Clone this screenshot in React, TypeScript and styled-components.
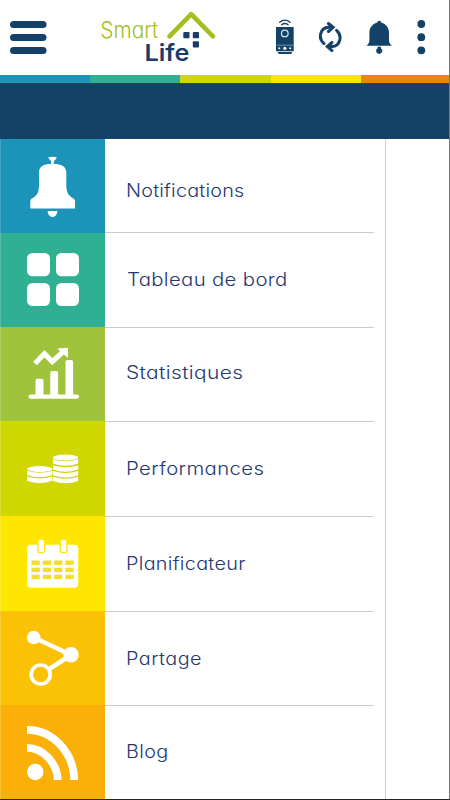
import React from "react";
import styled, { createGlobalStyle } from "styled-components";

const NAVY = "#144168";

const GlobalStyle = createGlobalStyle`
  *, *::before, *::after { box-sizing: border-box; }
  body { margin: 0; background: #fff; overflow: hidden; }
  svg { display: block; }
`;

const Screen = styled.div`
  width: 450px;
  height: 800px;
  display: flex;
  flex-direction: column;
  background: #fff;
  border-right: 1px solid #77797b;
  border-bottom: 1px solid #252525;
  font-family: Inter, "Open Sans", sans-serif;
  font-feature-settings: "cv11" 1;
  overflow: hidden;
`;

const Header = styled.header`
  height: 75px;
  flex: none;
  display: flex;
  align-items: flex-start;
`;

const IconButton = styled.button<{ $w: number; $ml: number }>`
  width: ${(p) => p.$w}px;
  height: 75px;
  margin: 0 0 0 ${(p) => p.$ml}px;
  padding: 0;
  border: 0;
  background: none;
  color: ${NAVY};
  flex: none;
`;

const Logo = styled.div`
  width: 120px;
  height: 75px;
  margin-left: 50px;
  flex: none;
`;

const Stripe = styled.div`
  height: 8px;
  flex: none;
  display: grid;
  grid-template-columns: 90px 90px 91px 90px 1fr;
`;

const Swatch = styled.span<{ $color: string }>`
  background: ${(p) => p.$color};
`;

const Banner = styled.div`
  height: 56px;
  flex: none;
  background: ${NAVY};
  border-top: 1px solid #244653;
`;

const Drawer = styled.nav`
  width: 386px;
  flex: 1;
  border-right: 1px solid #cfcfcf;
`;

const Row = styled.a<{ $h: number }>`
  display: flex;
  height: ${(p) => p.$h}px;
  text-decoration: none;
`;

const Tile = styled.span<{ $color: string }>`
  width: 105px;
  flex: none;
  background: ${(p) => p.$color};
  border-left: 1px solid rgba(255, 255, 255, 0.18);
  color: #fff;
`;

const LabelCell = styled.span<{ $top: number; $left: number; $line: "top" | "bottom" | "none" }>`
  width: 269px;
  padding: ${(p) => p.$top}px 0 0 ${(p) => p.$left}px;
  border: 0 solid #cbcbce;
  ${(p) => (p.$line === "none" ? "" : `border-${p.$line}-width: 1px;`)}
`;

const Label = styled.span<{ $spacing: number; $stretch: number }>`
  display: inline-block;
  color: #25376f;
  font-size: 18px;
  font-weight: 300;
  line-height: 22px;
  letter-spacing: ${(p) => p.$spacing}px;
  white-space: nowrap;
  transform: scaleX(${(p) => p.$stretch});
  transform-origin: 0 0;
`;

const MenuIcon = () => (
  <svg width="37" height="75" viewBox="0 0 37 75" fill="currentColor">
    <rect x="0" y="21" width="36.5" height="7" rx="3.5" />
    <rect x="0" y="34" width="36.5" height="7" rx="3.5" />
    <rect x="0" y="47" width="36.5" height="7" rx="3.5" />
  </svg>
);

const LogoMark = () => (
  <svg width="120" height="75" viewBox="97 0 120 75">
    <text x="100.3" y="38" fontSize="22.5" fontWeight="300" fill="#a3bf20" textLength="58" lengthAdjust="spacingAndGlyphs">Smart</text>
    <text x="144.5" y="61.3" fontSize="23.5" fontWeight="600" fill="#1b3b6b" textLength="45" lengthAdjust="spacingAndGlyphs">Life</text>
    <path d="M169.5 36.3 191.2 14.2 213 36.3" fill="none" stroke="#a2c01b" strokeWidth="4.6" strokeLinecap="round" strokeLinejoin="round" />
    <g fill="#1b3b6b">
      <rect x="183.3" y="32" width="6.2" height="6.2" rx="1" />
      <rect x="192.8" y="32" width="6.2" height="6.2" rx="1" />
      <rect x="192.8" y="41.3" width="6.2" height="6.2" rx="1" />
    </g>
  </svg>
);

const BoilerIcon = () => (
  <svg width="20" height="75" viewBox="275 0 20 75">
    <g fill="none" stroke="currentColor" strokeWidth="1.4" strokeLinecap="round">
      <path d="M279.7 22.2q5.2-4.2 10.3 0" />
      <path d="M281.6 24.7q3.3-2.4 6.5 0" />
    </g>
    <path d="M276 27h17.7v24.3H276zM277.5 52h14.7l-1 2h-12.4z" fill="currentColor" />
    <circle cx="284.8" cy="33.4" r="3.3" fill="none" stroke="#dce8f1" strokeWidth="1.2" />
    <path d="M276.5 45.2h16.8" stroke="#8ba5bb" strokeWidth=".8" />
    <g fill="#fff">
      <circle cx="279.3" cy="48.3" r="1" />
      <circle cx="284.8" cy="48.3" r="1.6" />
      <circle cx="290.2" cy="48.3" r="1" />
    </g>
  </svg>
);

const SyncIcon = () => (
  <svg width="24" height="75" viewBox="318 0 24 75" fill="none" stroke="currentColor" strokeWidth="3" strokeLinecap="round">
    <path d="M324 43.6C317.6 38 320.2 27.8 328.6 27.3h4" />
    <path d="M336.6 30.3c6.2 5.600 3.600 15.800-4.600 16.300h-4" />
    <path d="m328.4 23.500 4.700 3.900-4.700 4.100M332 42.500l-4.700 4 4.700 4.100" />
  </svg>
);

const AlertIcon = () => (
  <svg width="26" height="75" viewBox="366 0 26 75" fill="currentColor">
    <path d="M379.200 20.800c1.200 0 1.900.9 2 1.800 5.200 1.600 7.700 5.500 7.800 10v7.700c.1 2.500 1 3.700 2.800 5.500h-25.200c1.800-1.800 2.700-3 2.800-5.500v-7.700c.1-4.500 2.600-8.400 7.800-10 .1-.9.800-1.800 2-1.800z" />
    <path d="M377.500 46.700h3.400v1.500a3.100 3.100 0 1 1-3.400 0z" />
  </svg>
);

const MoreIcon = () => (
  <svg width="10" height="75" viewBox="416 0 10 75" fill="currentColor">
    <circle cx="421.3" cy="24" r="3.9" />
    <circle cx="421.3" cy="37.2" r="3.9" />
    <circle cx="421.3" cy="50.3" r="3.9" />
  </svg>
);

const TileSvg = ({ y, children }: { y: number; children: React.ReactNode }) => (
  <svg width="104" height="93" viewBox={`1 ${y} 104 93`} fill="currentColor">
    {children}
  </svg>
);

const items = [
  {
    label: "Notifications", color: "#1c93b8", y: 139, h: 94, top: 41, left: 21, spacing: 0.18, stretch: 1.1,
    line: "bottom" as const,
    icon: (
      <>
        <path d="M48.2 157.2q4.3-.8 8.6 0-.4 2.1-3 4v2.7c7.3-.1 12.300 2.500 12.500 8v13.700c.1 7.500 2.500 10.600 7.600 13.200q1.200.8 1.100 3v6.800H30.300v-6.800q0-2.200 1.200-3c5.300-2.600 7.400-5.700 7.500-13.200v-13.700c.2-5.500 4.900-8.100 12.200-8v-2.700q-2.500-1.900-3-4z" />
        <path d="M47.6 211h9.800c-.3 3.800-2.200 6-4.900 6s-4.600-2.200-4.900-6z" />
      </>
    ),
  },
  {
    label: "Tableau de bord", color: "#2fb092", y: 233, h: 94, top: 36, left: 22, spacing: 0.3, stretch: 1.13,
    line: "none" as const,
    icon: (
      <>
        <rect x="27" y="253" width="23" height="23.3" rx="5.5" />
        <rect x="56" y="253" width="23" height="23.3" rx="5.5" />
        <rect x="27" y="283" width="23" height="23" rx="5.5" />
        <rect x="56" y="283" width="23" height="23" rx="5.5" />
      </>
    ),
  },
  {
    label: "Statistiques", color: "#9fc33c", y: 327, h: 94, top: 34, left: 21, spacing: 0.35, stretch: 1.16,
    line: "top" as const,
    icon: (
      <>
        <rect x="28.5" y="394.5" width="50.5" height="4.2" rx="2.1" />
        <path d="M35.5 395v-14.2a2 2 0 0 1 2-2h4a2 2 0 0 1 2 2V395zM50.3 395v-22a2 2 0 0 1 2-2h3.8a2 2 0 0 1 2 2v22zM65.5 395v-33a2 2 0 0 1 2-2h3.6a2 2 0 0 1 2 2v33z" />
        <path d="m35 363.5 9.500-9.800 7.800 8 11.400-10.500" fill="none" stroke="currentColor" strokeWidth="5" />
        <path d="m57.2 348.4 10.9-.7-.3 10.2z" />
      </>
    ),
  },
  {
    label: "Performances", color: "#d0d700", y: 421, h: 95, top: 36, left: 21, spacing: 0.34, stretch: 1.13,
    line: "top" as const,
    icon: (
      <>
        <ellipse cx="39.8" cy="469" rx="12.7" ry="2.9" />
        <ellipse cx="65.5" cy="457.5" rx="12.7" ry="3" />
        {[470.8, 476.6].map((y) => (
          <path key={y} d={`M27 ${y}q12.8 4 25.4 0v4.2q-12.6 4.7-25.4 0z`} />
        ))}
        {[459.3, 465.2, 471, 476.7].map((y) => (
          <path key={y} d={`M52.9 ${y}q12.8 4 25.3 0v4.2q-12.5 4.7-25.3 0z`} />
        ))}
      </>
    ),
  },
  {
    label: "Planificateur", color: "#fee600", y: 516, h: 95, top: 36, left: 21, spacing: 0.27, stretch: 1.1,
    line: "top" as const,
    icon: (
      <>
        <rect x="27" y="544.7" width="51.2" height="43" rx="4" />
        <g stroke="#fee600" strokeWidth="1.3">
          <rect x="37.8" y="539" width="6.8" height="13.7" rx="2.5" />
          <rect x="60.2" y="539" width="6.8" height="13.7" rx="2.5" />
        </g>
        <g fill="#f4df24">
          {[560.5, 567.7, 574.7].map((y) =>
            [31.5, 42.8, 54.1, 65.4].map((x) => (
              <rect key={`${x}-${y}`} x={x} y={y} width="8.2" height="4.4" />
            )),
          )}
        </g>
      </>
    ),
  },
  {
    label: "Partage", color: "#fbc104", y: 611, h: 94, top: 36, left: 21, spacing: 0.43, stretch: 1.1,
    line: "top" as const,
    icon: (
      <>
        <path d="M34 637.5 71 655 40.7 674.5" fill="none" stroke="currentColor" strokeWidth="4.5" />
        <circle cx="33.7" cy="637.5" r="6.8" />
        <circle cx="71" cy="654.8" r="7.7" />
        <circle cx="40.7" cy="674.5" r="9.5" fill="#fbc104" stroke="currentColor" strokeWidth="3.7" />
      </>
    ),
  },
  {
    label: "Blog", color: "#fab008", y: 705, h: 94, top: 35, left: 21, spacing: 0.33, stretch: 1.1,
    line: "top" as const,
    icon: (
      <>
        <circle cx="35.3" cy="772" r="8.2" />
        <path d="M27 747.8C43.5 748 57 763 57.8 780M27 729.9C53.5 730 73.7 753 74.3 780" fill="none" stroke="currentColor" strokeWidth="7.8" />
      </>
    ),
  },
];

export default function App() {
  return (
    <>
      <GlobalStyle />
      <Screen>
        <Header>
          <IconButton $w={37} $ml={10} aria-label="Menu"><MenuIcon /></IconButton>
          <Logo><LogoMark /></Logo>
          <IconButton $w={20} $ml={58} aria-label="Appareil"><BoilerIcon /></IconButton>
          <IconButton $w={24} $ml={23} aria-label="Actualiser"><SyncIcon /></IconButton>
          <IconButton $w={26} $ml={24} aria-label="Alertes"><AlertIcon /></IconButton>
          <IconButton $w={10} $ml={24} aria-label="Options"><MoreIcon /></IconButton>
        </Header>
        <Stripe>
          {["#1d95b9", "#2fb092", "#cfd70b", "#fbe50b", "#eb8507"].map((c) => <Swatch key={c} $color={c} />)}
        </Stripe>
        <Banner />
        <Drawer>
          {items.map((item) => (
            <Row key={item.label} $h={item.h}>
              <Tile $color={item.color}><TileSvg y={item.y}>{item.icon}</TileSvg></Tile>
              <LabelCell $top={item.top} $left={item.left} $line={item.line}>
                <Label $spacing={item.spacing} $stretch={item.stretch}>{item.label}</Label>
              </LabelCell>
            </Row>
          ))}
        </Drawer>
      </Screen>
    </>
  );
}
